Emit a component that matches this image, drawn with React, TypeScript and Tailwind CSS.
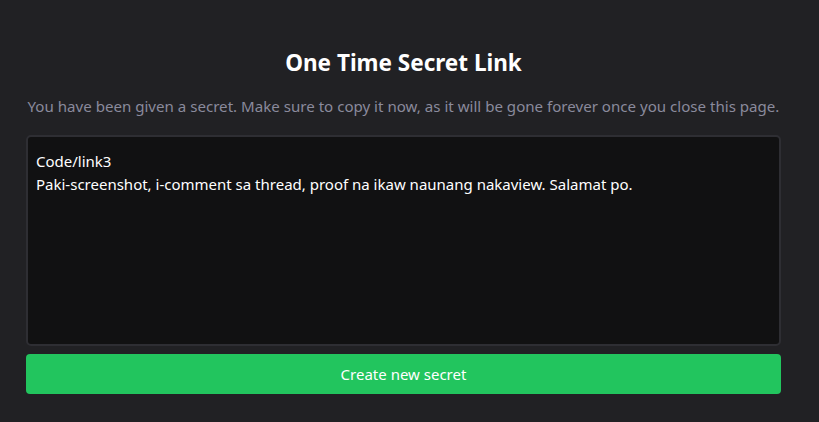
import React from "react";

export default function App() {
  return (
    <div
      className="min-h-[422px] w-full bg-[#212124] text-white"
      style={{ fontFamily: '"Noto Sans", "Open Sans", sans-serif' }}
    >
      <div className="ml-[26px] w-[755px] pt-[47px] flex flex-col">
        <h1 className="text-center text-[22.5px] font-bold leading-[32px] text-white">
          One Time Secret Link
        </h1>
        <p className="mt-[16px] text-center text-[15.1px] leading-[22px] text-[#8a8a9c] whitespace-nowrap">
          You have been given a secret. Make sure to copy it now, as it will be gone forever once you close this page.
        </p>
        <textarea
          readOnly
          className="mt-[18px] h-[211px] w-full resize-none rounded-[5px] border-2 border-[#2e2e33] bg-[#111112] px-[8px] pt-[13px] pb-[9px] text-[15px] leading-[23px] text-white outline-none"
          value={"Code/link3\nPaki-screenshot, i-comment sa thread, proof na ikaw naunang nakaview. Salamat po."}
        />
        <button className="mt-[8px] h-[40px] w-full rounded-[4px] bg-[#22c55e] text-[15px] text-white">
          Create new secret
        </button>
      </div>
    </div>
  );
}
